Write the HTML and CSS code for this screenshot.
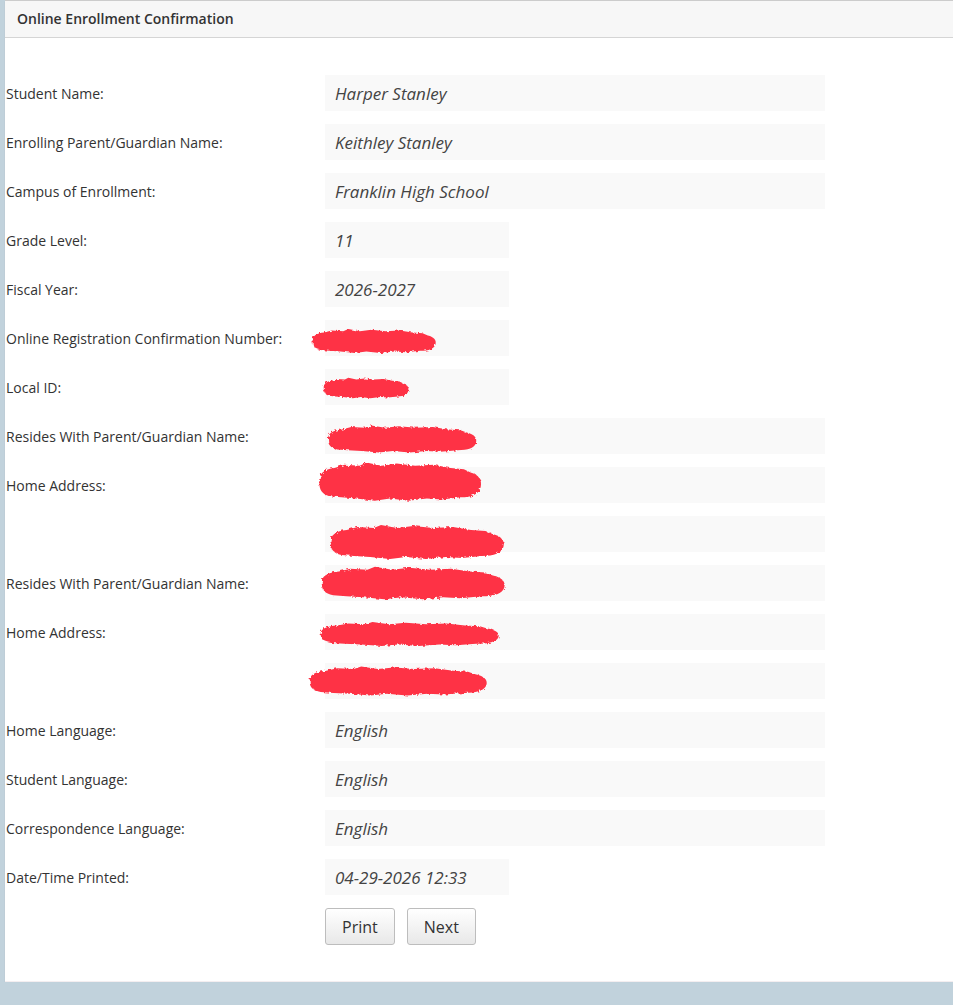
FILE: index.html
```html
<!DOCTYPE html>
<html lang="en">
<head>
  <meta charset="UTF-8">
  <title>Online Enrollment Confirmation</title>
  <link rel="stylesheet" href="styles.css">
</head>
<body>

  <svg class="defs" width="0" height="0">
    <defs>
      <filter id="rough" x="-10%" y="-20%" width="120%" height="140%">
        <feTurbulence type="fractalNoise" baseFrequency="0.35" numOctaves="2" result="noise" />
        <feDisplacementMap in="SourceGraphic" in2="noise" scale="4" />
      </filter>
      <path id="blob" d="M4,21 C3,13 10,9 22,8 L34,5 L52,6 L60,3 L78,6 L96,4 L118,6 L140,5 L160,8 L176,9 L184,12 C194,14 198,19 196,25 C194,31 186,34 172,34 L150,36 L132,35 L110,37 L88,35 L70,37 L48,35 L30,34 L16,33 C7,31 4,27 4,21 Z" />
    </defs>
  </svg>

  <div class="panel">
    <div class="panel-heading">Online Enrollment Confirmation</div>

    <div class="confirm">
      <div class="row"><label>Student Name:</label><div class="value">Harper Stanley</div></div>
      <div class="row"><label>Enrolling Parent/Guardian Name:</label><div class="value">Keithley Stanley</div></div>
      <div class="row"><label>Campus of Enrollment:</label><div class="value">Franklin High School</div></div>
      <div class="row"><label>Grade Level:</label><div class="value short">11</div></div>
      <div class="row"><label>Fiscal Year:</label><div class="value short">2026-2027</div></div>
      <div class="row">
        <label>Online Registration Confirmation Number:</label>
        <div class="value short">
          <svg class="redact" style="left:-15px;top:7px;width:128px;height:28px" viewBox="0 0 200 40" preserveAspectRatio="none"><use href="#blob"/></svg>
        </div>
      </div>
      <div class="row">
        <label>Local ID:</label>
        <div class="value short">
          <svg class="redact" style="left:-3px;top:7px;width:88px;height:24px" viewBox="0 0 200 40" preserveAspectRatio="none"><use href="#blob"/></svg>
        </div>
      </div>
      <div class="row">
        <label>Resides With Parent/Guardian Name:</label>
        <div class="value">
          <svg class="redact" style="left:0;top:5px;width:154px;height:32px" viewBox="0 0 200 40" preserveAspectRatio="none"><use href="#blob"/></svg>
        </div>
      </div>
      <div class="row">
        <label>Home Address:</label>
        <div class="value">
          <svg class="redact" style="left:-9px;top:-8px;width:168px;height:45px" viewBox="0 0 200 40" preserveAspectRatio="none"><use href="#blob"/></svg>
        </div>
      </div>
      <div class="row">
        <label></label>
        <div class="value">
          <svg class="redact" style="left:2px;top:6px;width:180px;height:40px" viewBox="0 0 200 40" preserveAspectRatio="none"><use href="#blob"/></svg>
        </div>
      </div>
      <div class="row">
        <label>Resides With Parent/Guardian Name:</label>
        <div class="value">
          <svg class="redact" style="left:-7px;top:-1px;width:190px;height:38px" viewBox="0 0 200 40" preserveAspectRatio="none"><use href="#blob"/></svg>
        </div>
      </div>
      <div class="row">
        <label>Home Address:</label>
        <div class="value">
          <svg class="redact" style="left:-8px;top:6px;width:185px;height:28px" viewBox="0 0 200 40" preserveAspectRatio="none"><use href="#blob"/></svg>
        </div>
      </div>
      <div class="row">
        <label></label>
        <div class="value">
          <svg class="redact" style="left:-19px;top:1px;width:184px;height:34px" viewBox="0 0 200 40" preserveAspectRatio="none"><use href="#blob"/></svg>
        </div>
      </div>
      <div class="row"><label>Home Language:</label><div class="value">English</div></div>
      <div class="row"><label>Student Language:</label><div class="value">English</div></div>
      <div class="row"><label>Correspondence Language:</label><div class="value">English</div></div>
      <div class="row"><label>Date/Time Printed:</label><div class="value short">04-29-2026 12:33</div></div>
      <div class="row">
        <label></label>
        <div class="buttons">
          <button type="button" onclick="window.print()">Print</button>
          <button type="button">Next</button>
        </div>
      </div>
    </div>
  </div>

</body>
</html>
```

FILE: styles.css
```css
html, body { margin: 0; padding: 0; }
body { background: #c1d2dc; font-family: "Open Sans", Arial, sans-serif; color: #333; overflow-x: hidden; }
.defs { position: absolute; }

.panel { margin-left: 5px; background: #fff; border-top: 1px solid #ccc; border-bottom: 1px solid #f4eef0; box-shadow: 0 2px 1px #b3b9be; }
.panel-heading { height: 36px; line-height: 36px; padding-left: 12px; background: #f7f7f7; border-bottom: 1px solid #d5d5d5; font-size: 14px; font-weight: 600; color: #333; }

.confirm { padding: 37px 0 36px 1px; display: flex; flex-direction: column; gap: 13px; }
.row { display: grid; grid-template-columns: 319px 500px; align-items: center; }
.row label { font-size: 14px; color: #333; }
.value { position: relative; height: 36px; line-height: 38px; padding-left: 10px; background: #f9f9f9; font-size: 17px; font-style: italic; color: #444; }
.value.short { width: 174px; }
.redact { position: absolute; fill: #fe3044; filter: url(#rough); overflow: visible; }

.buttons { display: flex; gap: 12px; }
button { font-family: "Open Sans", Arial, sans-serif; font-size: 16px; color: #333; height: 37px; padding: 0 16px; background: linear-gradient(#ffffff, #e8e8e8); border: 1px solid #bdbdbd; border-radius: 3px; cursor: pointer; }
```
